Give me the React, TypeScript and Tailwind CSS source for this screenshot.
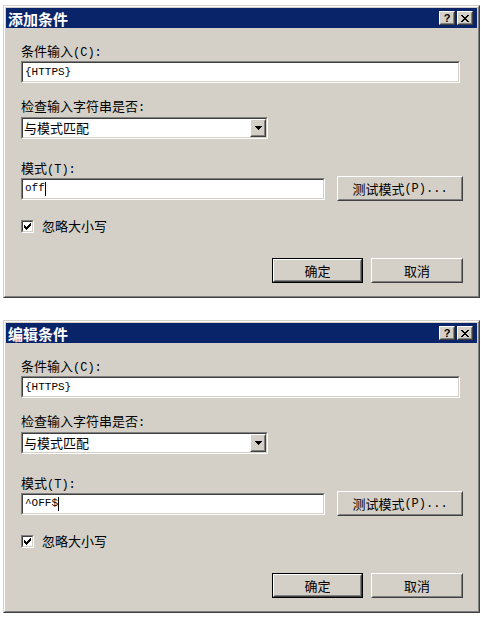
const cjk = { fontFamily: '"Noto Sans CJK SC", "Noto Sans", sans-serif' };
const mono = { fontFamily: '"Liberation Mono", "Noto Sans CJK SC", monospace' };

function L({ children }: { children: React.ReactNode }) {
  return (
    <span className="text-[12px]" style={mono}>
      {children}
    </span>
  );
}

function Raised({ className = "", children }: { className?: string; children?: React.ReactNode }) {
  return (
    <div className={`border border-t-white border-l-white border-b-[#404040] border-r-[#404040] ${className}`}>
      <div className="flex h-full w-full items-center justify-center border border-t-[#d4d0c8] border-l-[#d4d0c8] border-b-[#808080] border-r-[#808080] bg-[#d4d0c8]">
        {children}
      </div>
    </div>
  );
}

function Sunken({ className = "", children }: { className?: string; children?: React.ReactNode }) {
  return (
    <div className={`border border-t-[#808080] border-l-[#808080] border-b-white border-r-white ${className}`}>
      <div className="flex h-full w-full items-center border border-t-[#404040] border-l-[#404040] border-b-[#d4d0c8] border-r-[#d4d0c8] bg-white">
        {children}
      </div>
    </div>
  );
}

function Caret() {
  return <div className="h-[14px] w-px bg-black" />;
}

function Dialog({ title, pattern }: { title: string; pattern: string }) {
  return (
    <div className="h-[293px] w-[477px] border border-t-[#d4d0c8] border-l-[#d4d0c8] border-b-[#404040] border-r-[#404040]">
      <div className="flex h-full flex-col border border-t-white border-l-white border-b-[#808080] border-r-[#808080] bg-[#d4d0c8] p-px">
        {/* title bar */}
        <div className="flex h-[20px] items-center bg-[#0a246a] pl-[2px] pr-[4px]">
          <span className="text-[15px] font-bold leading-none text-white" style={cjk}>
            {title}
          </span>
          <div className="ml-auto flex gap-[2px]">
            <Raised className="h-[14px] w-[16px]">
              <span className="text-[11px] font-bold leading-none text-black" style={{ fontFamily: '"Liberation Sans", sans-serif' }}>
                ?
              </span>
            </Raised>
            <Raised className="h-[14px] w-[16px]">
              <svg width="8" height="7" viewBox="0 0 8 7" shapeRendering="crispEdges">
                <path d="M0 0h2v1h-2zM6 0h2v1h-2zM1 1h2v1h-2zM5 1h2v1h-2zM2 2h4v1h-4zM3 3h2v1h-2zM2 4h4v1h-4zM1 5h2v1h-2zM5 5h2v1h-2zM0 6h2v1h-2zM6 6h2v1h-2z" fill="#000" />
              </svg>
            </Raised>
          </div>
        </div>

        {/* client */}
        <div className="flex flex-1 flex-col pl-[15px] pr-[14px] text-[13px] text-black" style={cjk}>
          <div className="mt-[15px] h-[16px] leading-[16px]">
            条件输入<L>(C):</L>
          </div>
          <Sunken className="mt-[2px] h-[22px] w-[439px]">
            <span className="pl-[2px] text-[11px]" style={mono}>
              {"{HTTPS}"}
            </span>
          </Sunken>

          <div className="mt-[15px] h-[16px] leading-[16px]">
            检查输入字符串是否<L>:</L>
          </div>
          <Sunken className="mt-[3px] h-[22px] w-[247px]">
            <span className="flex-1 pl-[1px]">与模式匹配</span>
            <Raised className="h-[18px] w-[16px]">
              <svg width="7" height="4" viewBox="0 0 7 4" shapeRendering="crispEdges">
                <path d="M0 0h7v1h-7zM1 1h5v1h-5zM2 2h3v1h-3zM3 3h1v1h-1z" fill="#000" />
              </svg>
            </Raised>
          </Sunken>

          <div className="mt-[21px] h-[16px] leading-[16px]">
            模式<L>(T):</L>
          </div>
          <div className="flex h-[25px] items-center">
            <Sunken className="h-[22px] w-[304px]">
              <span className="pl-[2px] text-[11px]" style={mono}>
                {pattern}
              </span>
              <Caret />
            </Sunken>
            <Raised className="ml-[12px] h-[25px] w-[126px]">
              测试模式<L>(P)...</L>
            </Raised>
          </div>

          <div className="mt-[16px] flex h-[18px] items-center">
            <Sunken className="h-[13px] w-[13px]">
              <svg width="9" height="9" viewBox="0 0 9 9" shapeRendering="crispEdges">
                <path d="M7 1h1v3h-1zM6 2h1v3h-1zM5 3h1v3h-1zM4 4h1v3h-1zM3 5h1v3h-1zM2 4h1v3h-1zM1 3h1v3h-1z" fill="#000" />
              </svg>
            </Sunken>
            <span className="ml-[8px]">忽略大小写</span>
          </div>

          <div className="mt-[23px] flex justify-end gap-[8px]">
            <div className="border border-black">
              <Raised className="h-[23px] w-[89px]">确定</Raised>
            </div>
            <Raised className="h-[25px] w-[92px]">取消</Raised>
          </div>
        </div>
      </div>
    </div>
  );
}

export default function App() {
  return (
    <div className="flex h-[627px] w-[481px] flex-col gap-[22px] bg-white pl-[3px] pt-[5px]">
      <Dialog title="添加条件" pattern="off" />
      <Dialog title="编辑条件" pattern="^OFF$" />
    </div>
  );
}
